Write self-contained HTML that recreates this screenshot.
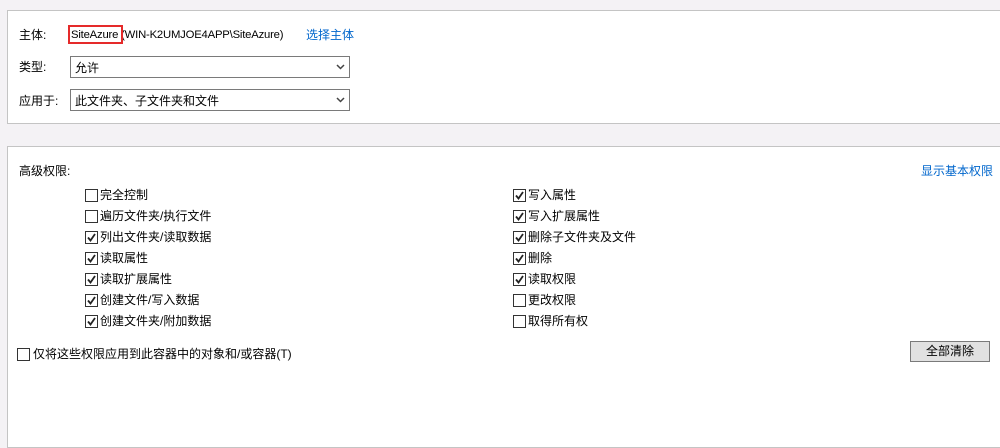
<!DOCTYPE html>
<html><head><meta charset="utf-8"><style>
body{margin:0;width:1000px;height:425px;background:#f4f2f5;font-family:"Liberation Sans","Noto Sans CJK SC",sans-serif;font-size:12px;color:#000;position:relative;overflow:hidden}
.a{position:absolute;white-space:nowrap;line-height:14px}
.p{position:absolute;background:#fff;border:1px solid #c4c4c4}
.sel{position:absolute;left:70px;width:278px;height:20px;border:1px solid #7a7a7a;background:#fff}
.sel span{position:absolute;left:4px;top:2px}
.sel svg{position:absolute;right:4px;top:7px}
.cb{position:absolute;width:11px;height:11px;border:1px solid #333;background:#fff}
.cb svg{position:absolute;left:1px;top:1px}
.lk{color:#0066cc}
</style></head><body>
<div class="p" style="left:7px;top:10px;width:1000px;height:112px"></div>
<div class="p" style="left:7px;top:146px;width:1000px;height:300px"></div>
<div class="a" style="left:19px;top:28px">主体:</div>
<div class="a" style="left:71px;top:28px;font-size:11.3px;letter-spacing:-0.2px">SiteAzure (WIN-K2UMJOE4APP\SiteAzure)</div>
<div style="position:absolute;left:68px;top:25px;width:55px;height:19px;border:2px solid #e52a2a;box-sizing:border-box"></div>
<div class="a lk" style="left:306px;top:28px">选择主体</div>
<div class="a" style="left:19px;top:60px">类型:</div>
<div class="sel" style="top:56px"><span>允许</span><svg width="9" height="6"><path d="M1 1L4.5 4.5L8 1" stroke="#444" stroke-width="1.5" fill="none"/></svg></div>
<div class="a" style="left:19px;top:94px">应用于:</div>
<div class="sel" style="top:89px"><span>此文件夹、子文件夹和文件</span><svg width="9" height="6"><path d="M1 1L4.5 4.5L8 1" stroke="#444" stroke-width="1.5" fill="none"/></svg></div>
<div class="a" style="left:19px;top:164px">高级权限:</div>
<div class="a lk" style="left:921px;top:164px">显示基本权限</div>
<div id="c"></div>
<div class="cb" style="left:17px;top:348px"></div>
<div class="a" style="left:33px;top:347px">仅将这些权限应用到此容器中的对象和/或容器(T)</div>
<div style="position:absolute;left:910px;top:341px;width:80px;height:21px;border:1px solid #7a7a7a;background:#e1e1e1;box-sizing:border-box;text-align:center;line-height:19px">全部清除</div>
<script>
var L=[["完全控制",0],["遍历文件夹/执行文件",0],["列出文件夹/读取数据",1],["读取属性",1],["读取扩展属性",1],["创建文件/写入数据",1],["创建文件夹/附加数据",1]];
var R=[["写入属性",1],["写入扩展属性",1],["删除子文件夹及文件",1],["删除",1],["读取权限",1],["更改权限",0],["取得所有权",0]];
var h="";
function f(arr,x){arr.forEach(function(it,i){var y=189+i*21;h+='<div class="cb" style="left:'+x+'px;top:'+y+'px">'+(it[1]?'<svg width="9" height="9"><path d="M1 4.5L3.5 7.5L8 1" stroke="#222" stroke-width="1.8" fill="none"/></svg>':'')+'</div><div class="a" style="left:'+(x+15)+'px;top:'+(y-1)+'px">'+it[0]+'</div>';});}
f(L,85);f(R,513);document.getElementById("c").innerHTML=h;
</script>
</body></html>
